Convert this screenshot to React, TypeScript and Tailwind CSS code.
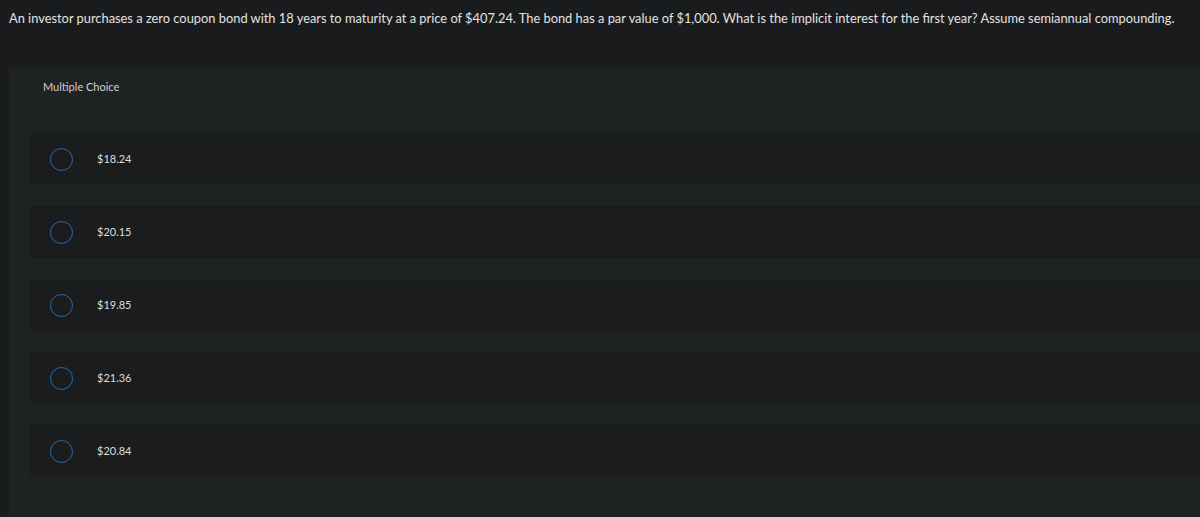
import { useState } from "react";

const choices = ["$18.24", "$20.15", "$19.85", "$21.36", "$20.84"];

export default function App() {
    const [picked, setPicked] = useState<number | null>(null);

    return (
        <div
            className="min-h-[517px] bg-[#1a1b1d] text-[#e2e2e2] overflow-hidden"
            style={{ fontFamily: "Lato, 'Open Sans', sans-serif" }}
        >
            <p className="pl-[9px] pt-[10px] text-[12.85px] leading-[16px] whitespace-nowrap">
                An investor purchases a zero coupon bond with 18 years to maturity at a price of $407.24. The bond has a par value of $1,000. What is the implicit interest for the first year? Assume semiannual compounding.
            </p>

            <div className="ml-[9px] mt-[41px] bg-[#1f2223] pb-[40px]">
                <div className="h-[40px] pl-[34px] flex items-center text-[11px] text-[#cfcfcf]">
                    Multiple Choice
                </div>
                <div className="pt-[26px] pl-[21px] flex flex-col gap-[21px]">
                    {choices.map((c, i) => (
                        <button
                            key={c}
                            onClick={() => setPicked(i)}
                            className="h-[52px] bg-[#1b1c1e] flex items-center text-left"
                        >
                            <span className="ml-[20px] w-[23px] h-[23px] rounded-full border-[1.5px] border-[#2a6aad] flex items-center justify-center">
                                {picked === i && (
                                    <span className="w-[11px] h-[11px] rounded-full bg-[#2a6aad]" />
                                )}
                            </span>
                            <span className="ml-[24px] text-[11px] text-[#dcdcdc]">
                                {c}
                            </span>
                        </button>
                    ))}
                </div>
            </div>
        </div>
    );
}
